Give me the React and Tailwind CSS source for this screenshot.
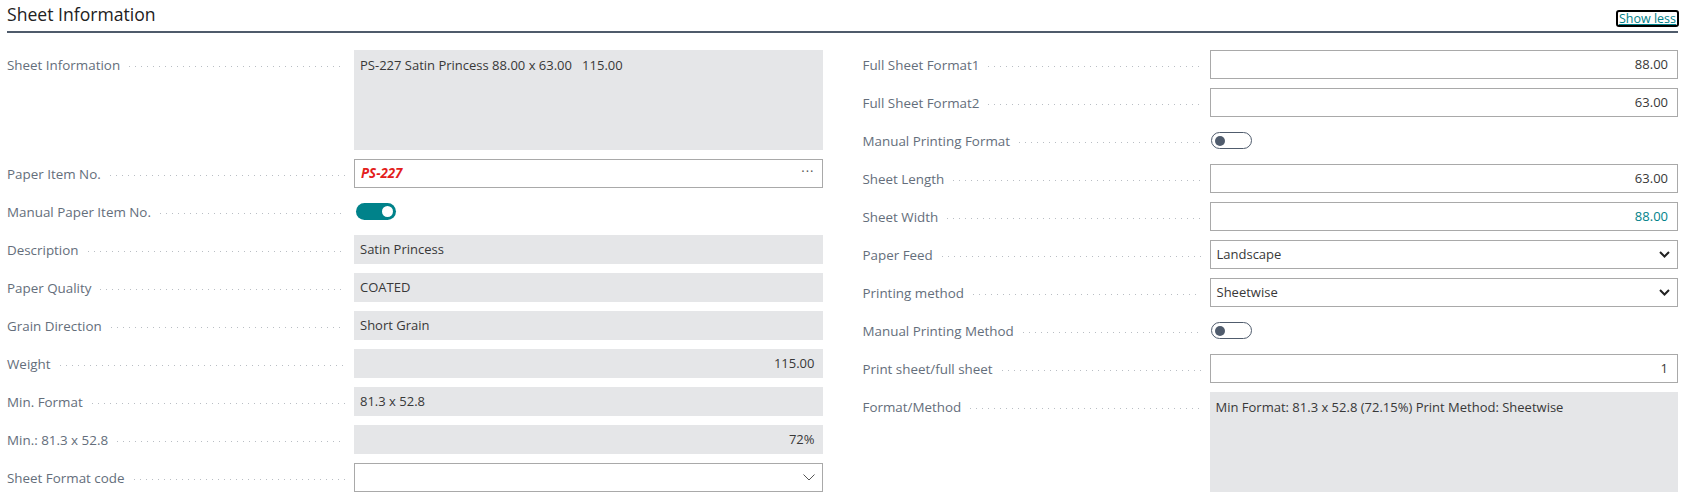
import React from "react";

const FONT = { fontFamily: '"Open Sans", "Noto Sans", Arial, sans-serif' };

function Leader() {
  return (
    <div className="flex-1 mx-[9px] mt-[2px] h-[1px] bg-[linear-gradient(to_right,#b9bec4_1px,transparent_1px)] bg-[length:6px_1px] bg-repeat-x" />
  );
}

function Label({ text }) {
  return (
    <div className="w-[347px] shrink-0 h-[29px] flex items-center pt-[2px]">
      <span className="text-[13.4px] text-[#646e7b] whitespace-nowrap">{text}</span>
      <Leader />
    </div>
  );
}

function ReadBox({ children, right, tall }) {
  return (
    <div
      className={
        "flex-1 bg-[#e5e6e8] text-[13px] text-[#383838] px-[6px] " +
        (tall ? "h-[100px] pt-[6px]" : "h-[29px] flex items-center") +
        (right ? " justify-end pr-[8px]" : "")
      }
    >
      {children}
    </div>
  );
}

function InputBox({ children, right, teal }) {
  return (
    <div
      className={
        "flex-1 h-[29px] border border-[#a9a9a9] bg-white flex items-center text-[13px] px-[6px] pr-[9px] " +
        (right ? "justify-end " : "") +
        (teal ? "text-[#00828a]" : "text-[#383838]")
      }
    >
      {children}
    </div>
  );
}

function SelectBox({ value }) {
  return (
    <div className="flex-1 h-[29px] border border-[#a9a9a9] bg-white flex items-center justify-between text-[13px] text-[#383838] pl-[6px] pr-[7px]">
      <span>{value}</span>
      <svg width="11" height="7" viewBox="0 0 11 7">
        <polyline points="1,1 5.5,5.5 10,1" fill="none" stroke="#222" strokeWidth="2" />
      </svg>
    </div>
  );
}

function Toggle({ on }) {
  return on ? (
    <div className="ml-[2px] w-[40px] h-[17px] rounded-full bg-[#00828a] flex items-center justify-end pr-[3px]">
      <div className="w-[11px] h-[11px] rounded-full bg-white" />
    </div>
  ) : (
    <div className="ml-[1px] w-[41px] h-[17px] rounded-full border border-[#505c6d] bg-white flex items-center pl-[3px]">
      <div className="w-[10px] h-[10px] rounded-full bg-[#505c6d]" />
    </div>
  );
}

function Row({ label, children, tall }) {
  return (
    <div className={"flex " + (tall ? "items-start" : "items-center h-[29px]")}>
      <Label text={label} />
      {children}
    </div>
  );
}

export default function App() {
  return (
    <div className="w-[1686px] h-[500px] bg-white pl-[7px] pr-[8px] overflow-hidden" style={FONT}>
      <div className="h-[33px] border-b-2 border-[#4f5b6b] flex items-center justify-between">
        <h2 className="text-[17.6px] text-[#212121] leading-none -mt-[1px]">Sheet Information</h2>
        <a className="text-[12.5px] text-[#00828a] underline border-2 border-black rounded-[3px] px-[1px] leading-[13px] mr-[-1px] mt-[5px]">
          Show less
        </a>
      </div>
      <div className="grid grid-cols-2 gap-x-10 mt-[17px]">
        <div className="flex flex-col gap-[9px]">
          <Row label="Sheet Information" tall>
            <ReadBox tall>PS-227 Satin Princess 88.00 x 63.00&nbsp;&nbsp;&nbsp;115.00</ReadBox>
          </Row>
          <Row label="Paper Item No.">
            <div className="flex-1 h-[29px] border border-[#a9a9a9] bg-white flex items-center justify-between pl-[6px] pr-[7px]">
              <span className="text-[13.3px] text-[#e3201b] font-bold italic">PS-227</span>
              <span className="text-[13px] text-[#555] tracking-[1px] -mt-[4px]">···</span>
            </div>
          </Row>
          <Row label="Manual Paper Item No.">
            <Toggle on />
          </Row>
          <Row label="Description">
            <ReadBox>Satin Princess</ReadBox>
          </Row>
          <Row label="Paper Quality">
            <ReadBox>COATED</ReadBox>
          </Row>
          <Row label="Grain Direction">
            <ReadBox>Short Grain</ReadBox>
          </Row>
          <Row label="Weight">
            <ReadBox right>115.00</ReadBox>
          </Row>
          <Row label="Min. Format">
            <ReadBox>81.3 x 52.8</ReadBox>
          </Row>
          <Row label="Min.: 81.3 x 52.8">
            <ReadBox right>72%</ReadBox>
          </Row>
          <Row label="Sheet Format code">
            <div className="flex-1 h-[29px] border border-[#a9a9a9] bg-white flex items-center justify-end pr-[7px]">
              <svg width="12" height="7" viewBox="0 0 12 7">
                <polyline points="0.5,0.5 6,6 11.5,0.5" fill="none" stroke="#555" strokeWidth="1" />
              </svg>
            </div>
          </Row>
        </div>
        <div className="flex flex-col gap-[9px]">
          <Row label="Full Sheet Format1">
            <InputBox right>88.00</InputBox>
          </Row>
          <Row label="Full Sheet Format2">
            <InputBox right>63.00</InputBox>
          </Row>
          <Row label="Manual Printing Format">
            <Toggle />
          </Row>
          <Row label="Sheet Length">
            <InputBox right>63.00</InputBox>
          </Row>
          <Row label="Sheet Width">
            <InputBox right teal>88.00</InputBox>
          </Row>
          <Row label="Paper Feed">
            <SelectBox value="Landscape" />
          </Row>
          <Row label="Printing method">
            <SelectBox value="Sheetwise" />
          </Row>
          <Row label="Manual Printing Method">
            <Toggle />
          </Row>
          <Row label="Print sheet/full sheet">
            <InputBox right>1</InputBox>
          </Row>
          <Row label="Format/Method" tall>
            <ReadBox tall>Min Format: 81.3 x 52.8 (72.15%) Print Method: Sheetwise</ReadBox>
          </Row>
        </div>
      </div>
    </div>
  );
}
